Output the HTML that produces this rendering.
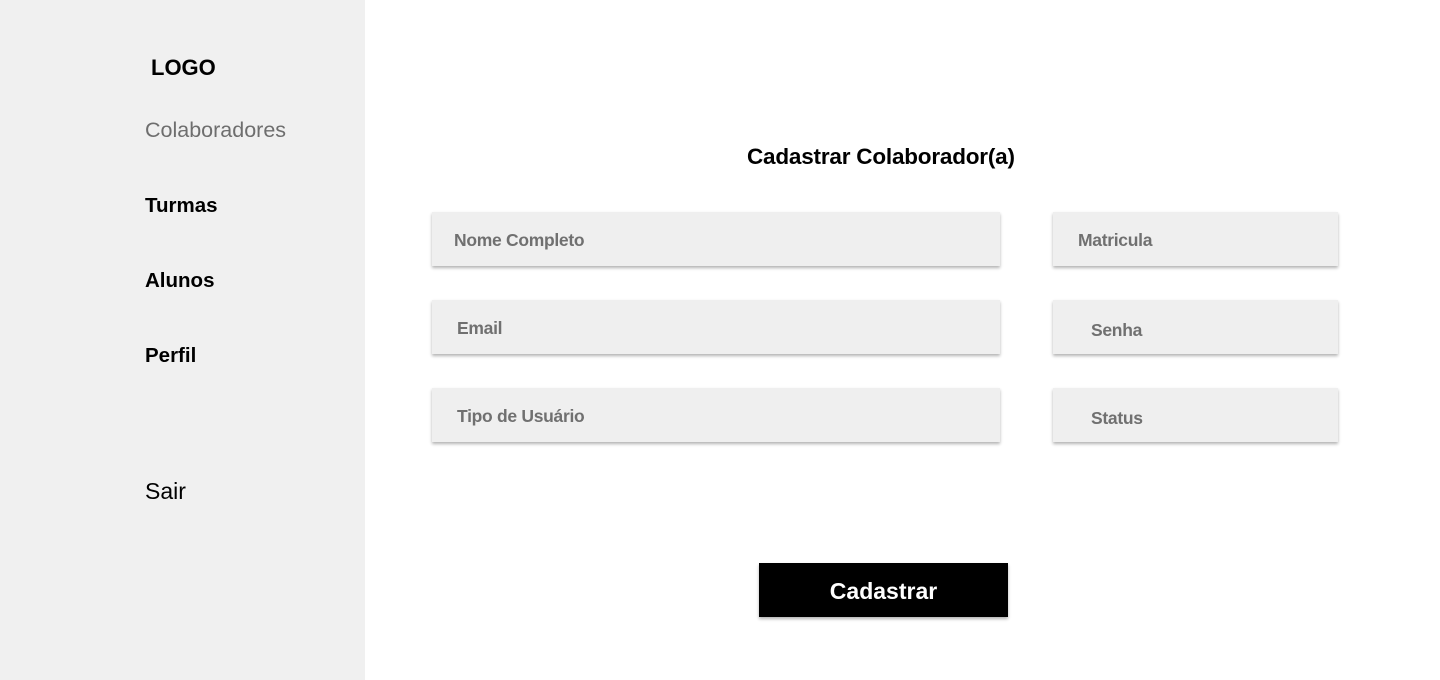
<!DOCTYPE html>
<html><head><meta charset="utf-8"><style>
*{margin:0;padding:0;box-sizing:border-box}
body{width:1440px;height:680px;position:relative;background:#fff;font-family:"Liberation Sans",Arial,sans-serif;overflow:hidden}
.side{position:absolute;left:0;top:0;width:365px;height:680px;background:#f0f0f0}
.t{position:absolute;white-space:nowrap}
.box{position:absolute;height:54px;background:#efefef;box-shadow:0 2px 3px rgba(0,0,0,.3)}
.box span{position:absolute;top:18px;font-weight:bold;font-size:17.5px;color:#707070;letter-spacing:-0.3px}
</style></head><body>
<div class="side">
<div class="t" style="left:151px;top:55px;font-size:22px;font-weight:bold;color:#000">LOGO</div>
<div class="t" style="left:145px;top:118px;font-size:21.5px;color:#6e6e6e">Colaboradores</div>
<div class="t" style="left:145px;top:194px;font-size:20.5px;font-weight:bold">Turmas</div>
<div class="t" style="left:145px;top:269px;font-size:20.5px;font-weight:bold">Alunos</div>
<div class="t" style="left:145px;top:344px;font-size:20.5px;font-weight:bold">Perfil</div>
<div class="t" style="left:145px;top:478px;font-size:23px">Sair</div>
</div>
<div class="t" style="left:747px;top:144px;font-size:22.5px;font-weight:bold;letter-spacing:-0.2px">Cadastrar Colaborador(a)</div>
<div class="box" style="left:432px;top:212px;width:568px"><span style="left:22px">Nome Completo</span></div>
<div class="box" style="left:432px;top:300px;width:568px"><span style="left:25px;top:18px">Email</span></div>
<div class="box" style="left:432px;top:388px;width:568px"><span style="left:25px">Tipo de Usuário</span></div>
<div class="box" style="left:1053px;top:212px;width:285px"><span style="left:25px">Matricula</span></div>
<div class="box" style="left:1053px;top:300px;width:285px"><span style="left:38px;top:20px">Senha</span></div>
<div class="box" style="left:1053px;top:388px;width:285px"><span style="left:38px;top:20px">Status</span></div>
<div style="position:absolute;left:759px;top:563px;width:249px;height:54px;background:#000;box-shadow:0 2px 3px rgba(0,0,0,.3);color:#fff;font-weight:bold;font-size:23px;text-align:center;line-height:56px">Cadastrar</div>
</body></html>
